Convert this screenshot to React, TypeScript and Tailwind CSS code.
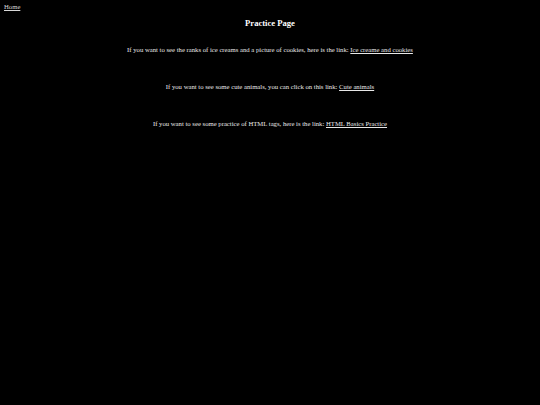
export default function App() {
  return (
    <div className="min-h-[405px] w-full bg-black text-[#e8e8e8] font-['Liberation_Serif',serif] text-[6.7px] leading-none">
      <div className="px-[4px] pt-[4px]">
        <a href="#" className="underline text-[#d8d8d8]">Home</a>
      </div>
      <h1 className="mt-[8px] text-center font-bold text-[8.6px] text-white">Practice Page</h1>
      <div className="flex flex-col items-center gap-[30px] mt-[20px]">
        <p>
          If you want to see the ranks of ice creams and a picture of cookies, here is the link:{' '}
          <a href="#" className="underline">Ice creame and cookies</a>
        </p>
        <p>
          If you want to see some cute animals, you can click on this link:{' '}
          <a href="#" className="underline">Cute animals</a>
        </p>
        <p>
          If you want to see some practice of HTML tags, here is the link:{' '}
          <a href="#" className="underline">HTML Basics Practice</a>
        </p>
      </div>
    </div>
  );
}
